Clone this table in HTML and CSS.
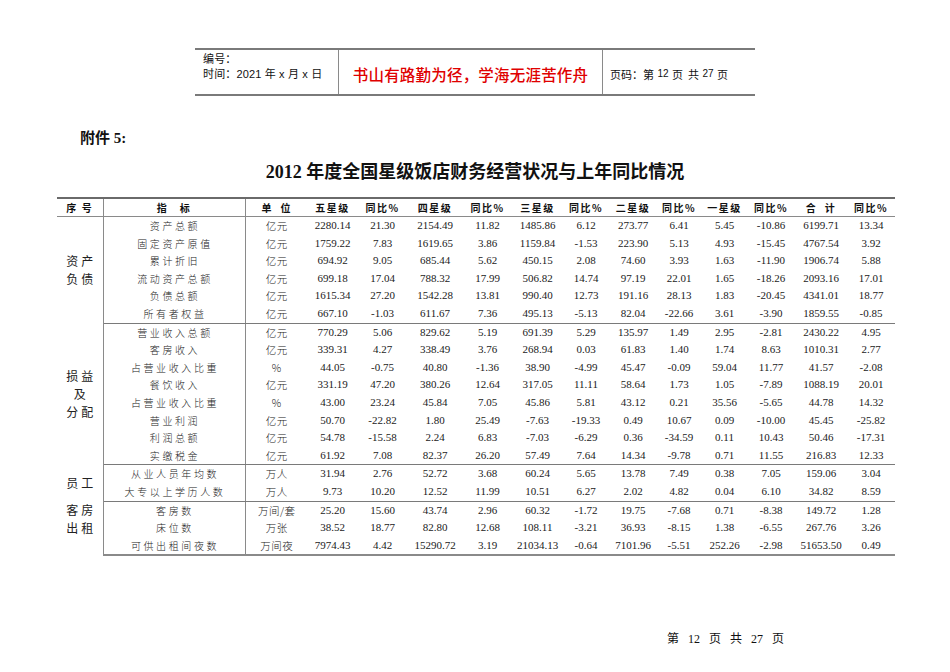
FILE: index.html
```html
<!DOCTYPE html>
<html lang="zh-CN">
<head>
<meta charset="utf-8">
<title>2012年度全国星级饭店财务经营状况与上年同比情况</title>
<link rel="stylesheet" href="styles.css">
</head>
<body>
<div class="page">
  <div class="doc-header">
    <div class="hd-left">
      <div>编号：</div>
      <div>时间：2021 年 x 月 x 日</div>
    </div>
    <div class="hd-mid">书山有路勤为径，学海无涯苦作舟</div>
    <div class="hd-right">页码：第 <span class="n">12</span> 页&nbsp; 共 <span class="n">27</span> 页</div>
  </div>

  <div class="annex">附件 5:</div>
  <h1 class="title">2012 年度全国星级饭店财务经营状况与上年同比情况</h1>

  <table class="fin">
    <colgroup>
      <col style="width:46px"><col style="width:142px"><col style="width:63px">
      <col style="width:49px"><col style="width:51px"><col style="width:54px">
      <col style="width:51px"><col style="width:49px"><col style="width:48px">
      <col style="width:46px"><col style="width:46px"><col style="width:45px">
      <col style="width:48px"><col style="width:52px"><col style="width:48px">
    </colgroup>
    <thead>
      <tr>
        <th class="c-sec">序 号</th>
        <th class="c-ind">指&nbsp;&nbsp; 标</th>
        <th class="c-unit">单&nbsp; 位</th>
        <th>五星级</th><th>同比%</th>
        <th>四星级</th><th>同比%</th>
        <th>三星级</th><th>同比%</th>
        <th>二星级</th><th>同比%</th>
        <th>一星级</th><th>同比%</th>
        <th>合&nbsp; 计</th><th>同比%</th>
      </tr>
    </thead>
    <tbody class="sec">
      <tr><td class="c-sec" rowspan="6">资产<br>负债</td><td class="c-ind">资产总额</td><td class="c-unit">亿元</td><td>2280.14</td><td>21.30</td><td>2154.49</td><td>11.82</td><td>1485.86</td><td>6.12</td><td>273.77</td><td>6.41</td><td>5.45</td><td>-10.86</td><td>6199.71</td><td>13.34</td></tr>
      <tr><td class="c-ind">固定资产原值</td><td class="c-unit">亿元</td><td>1759.22</td><td>7.83</td><td>1619.65</td><td>3.86</td><td>1159.84</td><td>-1.53</td><td>223.90</td><td>5.13</td><td>4.93</td><td>-15.45</td><td>4767.54</td><td>3.92</td></tr>
      <tr><td class="c-ind">累计折旧</td><td class="c-unit">亿元</td><td>694.92</td><td>9.05</td><td>685.44</td><td>5.62</td><td>450.15</td><td>2.08</td><td>74.60</td><td>3.93</td><td>1.63</td><td>-11.90</td><td>1906.74</td><td>5.88</td></tr>
      <tr><td class="c-ind">流动资产总额</td><td class="c-unit">亿元</td><td>699.18</td><td>17.04</td><td>788.32</td><td>17.99</td><td>506.82</td><td>14.74</td><td>97.19</td><td>22.01</td><td>1.65</td><td>-18.26</td><td>2093.16</td><td>17.01</td></tr>
      <tr><td class="c-ind">负债总额</td><td class="c-unit">亿元</td><td>1615.34</td><td>27.20</td><td>1542.28</td><td>13.81</td><td>990.40</td><td>12.73</td><td>191.16</td><td>28.13</td><td>1.83</td><td>-20.45</td><td>4341.01</td><td>18.77</td></tr>
      <tr><td class="c-ind">所有者权益</td><td class="c-unit">亿元</td><td>667.10</td><td>-1.03</td><td>611.67</td><td>7.36</td><td>495.13</td><td>-5.13</td><td>82.04</td><td>-22.66</td><td>3.61</td><td>-3.90</td><td>1859.55</td><td>-0.85</td></tr>
    </tbody>
    <tbody class="sec">
      <tr><td class="c-sec" rowspan="8">损益<br>及<br>分配</td><td class="c-ind">营业收入总额</td><td class="c-unit">亿元</td><td>770.29</td><td>5.06</td><td>829.62</td><td>5.19</td><td>691.39</td><td>5.29</td><td>135.97</td><td>1.49</td><td>2.95</td><td>-2.81</td><td>2430.22</td><td>4.95</td></tr>
      <tr><td class="c-ind">客房收入</td><td class="c-unit">亿元</td><td>339.31</td><td>4.27</td><td>338.49</td><td>3.76</td><td>268.94</td><td>0.03</td><td>61.83</td><td>1.40</td><td>1.74</td><td>8.63</td><td>1010.31</td><td>2.77</td></tr>
      <tr><td class="c-ind">占营业收入比重</td><td class="c-unit">%</td><td>44.05</td><td>-0.75</td><td>40.80</td><td>-1.36</td><td>38.90</td><td>-4.99</td><td>45.47</td><td>-0.09</td><td>59.04</td><td>11.77</td><td>41.57</td><td>-2.08</td></tr>
      <tr><td class="c-ind">餐饮收入</td><td class="c-unit">亿元</td><td>331.19</td><td>47.20</td><td>380.26</td><td>12.64</td><td>317.05</td><td>11.11</td><td>58.64</td><td>1.73</td><td>1.05</td><td>-7.89</td><td>1088.19</td><td>20.01</td></tr>
      <tr><td class="c-ind">占营业收入比重</td><td class="c-unit">%</td><td>43.00</td><td>23.24</td><td>45.84</td><td>7.05</td><td>45.86</td><td>5.81</td><td>43.12</td><td>0.21</td><td>35.56</td><td>-5.65</td><td>44.78</td><td>14.32</td></tr>
      <tr><td class="c-ind">营业利润</td><td class="c-unit">亿元</td><td>50.70</td><td>-22.82</td><td>1.80</td><td>25.49</td><td>-7.63</td><td>-19.33</td><td>0.49</td><td>10.67</td><td>0.09</td><td>-10.00</td><td>45.45</td><td>-25.82</td></tr>
      <tr><td class="c-ind">利润总额</td><td class="c-unit">亿元</td><td>54.78</td><td>-15.58</td><td>2.24</td><td>6.83</td><td>-7.03</td><td>-6.29</td><td>0.36</td><td>-34.59</td><td>0.11</td><td>10.43</td><td>50.46</td><td>-17.31</td></tr>
      <tr><td class="c-ind">实缴税金</td><td class="c-unit">亿元</td><td>61.92</td><td>7.08</td><td>82.37</td><td>26.20</td><td>57.49</td><td>7.64</td><td>14.34</td><td>-9.78</td><td>0.71</td><td>11.55</td><td>216.83</td><td>12.33</td></tr>
    </tbody>
    <tbody class="sec">
      <tr><td class="c-sec" rowspan="2">员工</td><td class="c-ind">从业人员年均数</td><td class="c-unit">万人</td><td>31.94</td><td>2.76</td><td>52.72</td><td>3.68</td><td>60.24</td><td>5.65</td><td>13.78</td><td>7.49</td><td>0.38</td><td>7.05</td><td>159.06</td><td>3.04</td></tr>
      <tr><td class="c-ind">大专以上学历人数</td><td class="c-unit">万人</td><td>9.73</td><td>10.20</td><td>12.52</td><td>11.99</td><td>10.51</td><td>6.27</td><td>2.02</td><td>4.82</td><td>0.04</td><td>6.10</td><td>34.82</td><td>8.59</td></tr>
    </tbody>
    <tbody class="sec last">
      <tr><td class="c-sec top" rowspan="3">客房<br>出租</td><td class="c-ind">客房数</td><td class="c-unit">万间/套</td><td>25.20</td><td>15.60</td><td>43.74</td><td>2.96</td><td>60.32</td><td>-1.72</td><td>19.75</td><td>-7.68</td><td>0.71</td><td>-8.38</td><td>149.72</td><td>1.28</td></tr>
      <tr><td class="c-ind">床位数</td><td class="c-unit">万张</td><td>38.52</td><td>18.77</td><td>82.80</td><td>12.68</td><td>108.11</td><td>-3.21</td><td>36.93</td><td>-8.15</td><td>1.38</td><td>-6.55</td><td>267.76</td><td>3.26</td></tr>
      <tr><td class="c-ind">可供出租间夜数</td><td class="c-unit">万间夜</td><td>7974.43</td><td>4.42</td><td>15290.72</td><td>3.19</td><td>21034.13</td><td>-0.64</td><td>7101.96</td><td>-5.51</td><td>252.26</td><td>-2.98</td><td>51653.50</td><td>0.49</td></tr>
    </tbody>
  </table>

  <div class="footer">第 12 页 共 27 页</div>
</div>
</body>
</html>
```

FILE: styles.css
```css
html, body {
  margin: 0;
  padding: 0;
  background: #fff;
}
body {
  font-family: "Liberation Serif", "Noto Sans CJK SC", serif;
  color: #111;
}
.page {
  width: 950px;
  height: 672px;
  overflow: hidden;
  padding-top: 48px;
  box-sizing: border-box;
}

/* ---------- document header box ---------- */
.doc-header {
  margin-left: 195px;
  width: 560px;
  height: 48px;
  box-sizing: border-box;
  border-top: 2px solid #7a7a7a;
  border-bottom: 2px solid #7a7a7a;
  display: flex;
  font-family: "Liberation Sans", "Noto Sans CJK SC", sans-serif;
  font-size: 11px;
  color: #111;
}
.hd-left {
  width: 143px;
  padding: 2px 0 0 8px;
  box-sizing: border-box;
  line-height: 15px;
  letter-spacing: 0.15px;
}
.hd-mid {
  width: 265px;
  border-left: 1.5px solid #8a8a8a;
  border-right: 1.5px solid #8a8a8a;
  box-sizing: border-box;
  display: flex;
  align-items: center;
  justify-content: center;
  padding-top: 4px;
  color: #e00000;
  font-family: "Noto Sans CJK SC", sans-serif;
  font-size: 15.5px;
  font-weight: 500;
  letter-spacing: 0.2px;
}
.hd-right {
  flex: 1;
  display: flex;
  align-items: center;
  padding: 3px 0 0 7px;
  font-family: "Noto Sans CJK SC", sans-serif;
  font-size: 11px;
  white-space: pre;
}
.hd-right .n {
  font-family: "Liberation Sans", sans-serif;
  font-size: 10px;
  margin: 0 1px;
}

/* ---------- headings ---------- */
.annex {
  margin-top: 32px;
  padding-left: 80px;
  font-family: "Liberation Serif", "Noto Sans CJK SC", serif;
  font-weight: bold;
  font-size: 15px;
  line-height: 20px;
}
.title {
  margin: 12px 0 0 0;
  text-align: center;
  font-family: "Liberation Serif", "Noto Sans CJK SC", serif;
  font-weight: bold;
  font-size: 18px;
  line-height: 24px;
}

/* ---------- table ---------- */
.fin {
  margin: 13px 0 0 57px;
  width: 838px;
  table-layout: fixed;
  border-collapse: collapse;
  font-size: 11px;
}
.fin th, .fin td {
  padding: 0;
  text-align: center;
  white-space: nowrap;
  overflow: hidden;
}
.fin thead th {
  height: 17px;
  border-top: 2px solid #6a6a6a;
  border-bottom: 1px solid #8a8a8a;
  font-family: "Noto Sans CJK SC", sans-serif;
  font-weight: bold;
  font-size: 10px;
  letter-spacing: 1.5px;
  color: #111;
}
.fin td {
  height: 17.6px;
  line-height: 17.6px;
  font-family: "Liberation Serif", serif;
  font-size: 11px;
  color: #1a1a1a;
}
.fin .c-sec {
  border-right: 1.5px solid #8a8a8a;
}
.fin .c-unit {
  border-left: 1.5px solid #8a8a8a;
}
.fin td.c-sec {
  font-family: "Noto Sans CJK SC", sans-serif;
  font-size: 12px;
  line-height: 18px;
  letter-spacing: 3px;
  padding-left: 3px;
  color: #222;
  vertical-align: middle;
}
.fin td.c-sec.top {
  vertical-align: top;
  padding-top: 0;
}
.fin td.c-ind {
  font-family: "Noto Sans CJK SC", sans-serif;
  font-size: 10px;
  font-weight: 300;
  letter-spacing: 2.6px;
  padding-left: 2px;
  color: #222;
}
.fin td.c-unit {
  font-family: "Noto Sans CJK SC", "Liberation Serif", sans-serif;
  font-size: 10.5px;
  font-weight: 300;
  letter-spacing: 0.5px;
  color: #222;
}
.fin tbody.sec tr:last-child td {
  border-bottom: 1.5px solid #7a7a7a;
}
.fin tbody.sec.last tr:last-child td {
  border-bottom: 2px solid #8a8a8a;
}
.fin tbody.sec.last td.c-sec {
  border-bottom: none;
}

/* ---------- footer ---------- */
.footer {
  margin-top: 75px;
  text-align: right;
  padding-right: 166px;
  font-family: "Liberation Serif", "Noto Sans CJK SC", serif;
  font-size: 12px;
  line-height: 16px;
  color: #111;
  word-spacing: 6px;
}
```
